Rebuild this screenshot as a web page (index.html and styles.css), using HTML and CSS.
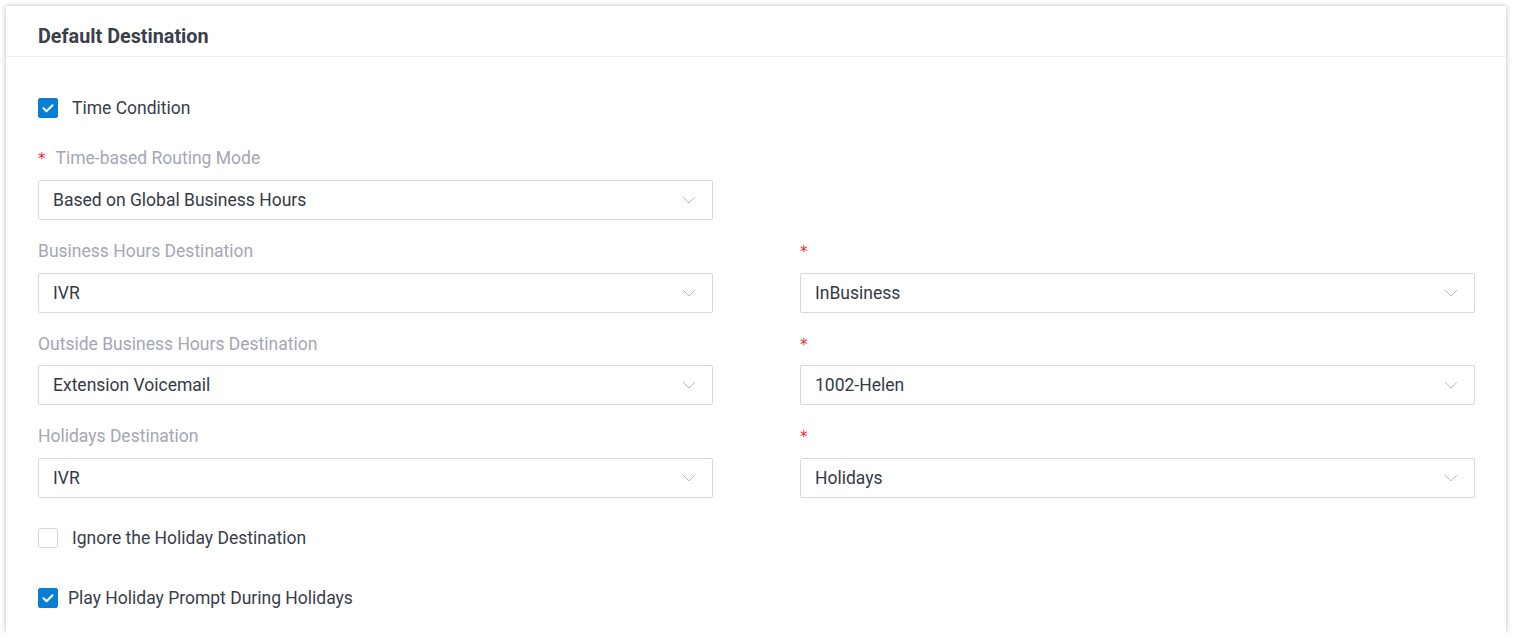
FILE: index.html
```html
<!DOCTYPE html>
<html lang="en">
<head>
<meta charset="utf-8">
<title>Default Destination</title>
<link rel="stylesheet" href="styles.css">
</head>
<body>
<div class="card">
  <div class="card-header">Default Destination</div>
  <div class="card-body">
    <label class="check-row gap14">
      <span class="checkbox checked"><svg viewBox="0 0 20 20" width="20" height="20"><path d="M5.5 10.2 L8.6 13.2 L14.5 7.2" fill="none" stroke="#fff" stroke-width="2" stroke-linecap="round" stroke-linejoin="round"/></svg></span>
      <span class="check-text">Time Condition</span>
    </label>

    <div class="form-grid">
      <div class="item">
        <div class="label"><span class="req">*</span>Time-based Routing Mode</div>
        <div class="select"><span>Based on Global Business Hours</span><svg class="chev" viewBox="0 0 14 8" width="14" height="8"><path d="M1 1 L7 7 L13 1" fill="none" stroke="#b9bbc6" stroke-width="1"/></svg></div>
      </div>
      <div class="item empty"></div>

      <div class="item">
        <div class="label">Business Hours Destination</div>
        <div class="select"><span>IVR</span><svg class="chev" viewBox="0 0 14 8" width="14" height="8"><path d="M1 1 L7 7 L13 1" fill="none" stroke="#b9bbc6" stroke-width="1"/></svg></div>
      </div>
      <div class="item">
        <div class="label"><span class="req">*</span></div>
        <div class="select"><span>InBusiness</span><svg class="chev" viewBox="0 0 14 8" width="14" height="8"><path d="M1 1 L7 7 L13 1" fill="none" stroke="#b9bbc6" stroke-width="1"/></svg></div>
      </div>

      <div class="item">
        <div class="label">Outside Business Hours Destination</div>
        <div class="select"><span>Extension Voicemail</span><svg class="chev" viewBox="0 0 14 8" width="14" height="8"><path d="M1 1 L7 7 L13 1" fill="none" stroke="#b9bbc6" stroke-width="1"/></svg></div>
      </div>
      <div class="item">
        <div class="label"><span class="req">*</span></div>
        <div class="select"><span>1002-Helen</span><svg class="chev" viewBox="0 0 14 8" width="14" height="8"><path d="M1 1 L7 7 L13 1" fill="none" stroke="#b9bbc6" stroke-width="1"/></svg></div>
      </div>

      <div class="item">
        <div class="label">Holidays Destination</div>
        <div class="select"><span>IVR</span><svg class="chev" viewBox="0 0 14 8" width="14" height="8"><path d="M1 1 L7 7 L13 1" fill="none" stroke="#b9bbc6" stroke-width="1"/></svg></div>
      </div>
      <div class="item">
        <div class="label"><span class="req">*</span></div>
        <div class="select"><span>Holidays</span><svg class="chev" viewBox="0 0 14 8" width="14" height="8"><path d="M1 1 L7 7 L13 1" fill="none" stroke="#b9bbc6" stroke-width="1"/></svg></div>
      </div>
    </div>

    <label class="check-row gap14 ignore">
      <span class="checkbox"></span>
      <span class="check-text">Ignore the Holiday Destination</span>
    </label>

    <label class="check-row gap10 play">
      <span class="checkbox checked"><svg viewBox="0 0 20 20" width="20" height="20"><path d="M5.5 10.2 L8.6 13.2 L14.5 7.2" fill="none" stroke="#fff" stroke-width="2" stroke-linecap="round" stroke-linejoin="round"/></svg></span>
      <span class="check-text">Play Holiday Prompt During Holidays</span>
    </label>
  </div>
</div>
</body>
</html>
```

FILE: styles.css
```css
* { box-sizing: border-box; }

html, body {
  margin: 0;
  padding: 0;
  background: #ffffff;
  font-family: Roboto, "Liberation Sans", Arial, sans-serif;
}

body {
  padding: 6px 0 0 6px;
}

.card {
  width: 1500px;
  height: 627px;
  background: #ffffff;
  box-shadow: 0 0 5px rgba(0, 0, 0, 0.28);
  overflow: hidden;
}

.card-header {
  height: 51px;
  padding: 19px 0 0 32px;
  font-size: 19.8px;
  line-height: 24px;
  font-weight: 700;
  color: #3a3f4c;
  border-bottom: 1px solid #eceef2;
}

.card-body {
  padding: 41px 30px 0 32px;
}

.check-row {
  display: flex;
  align-items: center;
  height: 20px;
  font-size: 17.5px;
  line-height: 20px;
  color: #383e4b;
}

.gap14 { gap: 14px; }
.gap10 { gap: 10px; }

.checkbox {
  width: 20px;
  height: 20px;
  border: 1px solid #d6d8e0;
  border-radius: 2px;
  background: #fff;
  display: flex;
  align-items: center;
  justify-content: center;
  flex: none;
}

.checkbox.checked {
  background: #0a7fd2;
  border-color: #0a7fd2;
}

.checkbox svg { display: block; flex: none; }

.form-grid {
  display: grid;
  grid-template-columns: 675px 675px;
  column-gap: 87px;
  row-gap: 20px;
  margin-top: 29.4px;
}

.label {
  height: 22px;
  line-height: 22px;
  font-size: 17.5px;
  color: #a4a7b5;
  margin-bottom: 10.67px;
  white-space: nowrap;
}

.req {
  color: #f0262d;
  font-size: 15px;
  margin-right: 10px;
  font-family: "DejaVu Sans", sans-serif;
}

.select {
  height: 40px;
  border: 1px solid #d6d8e2;
  border-radius: 2px;
  display: flex;
  align-items: center;
  justify-content: space-between;
  padding: 0 16px 0 14px;
  font-size: 17.5px;
  color: #343a47;
}

.chev { display: block; }

.ignore { margin-top: 30px; }
.play { margin-top: 40px; }
```
